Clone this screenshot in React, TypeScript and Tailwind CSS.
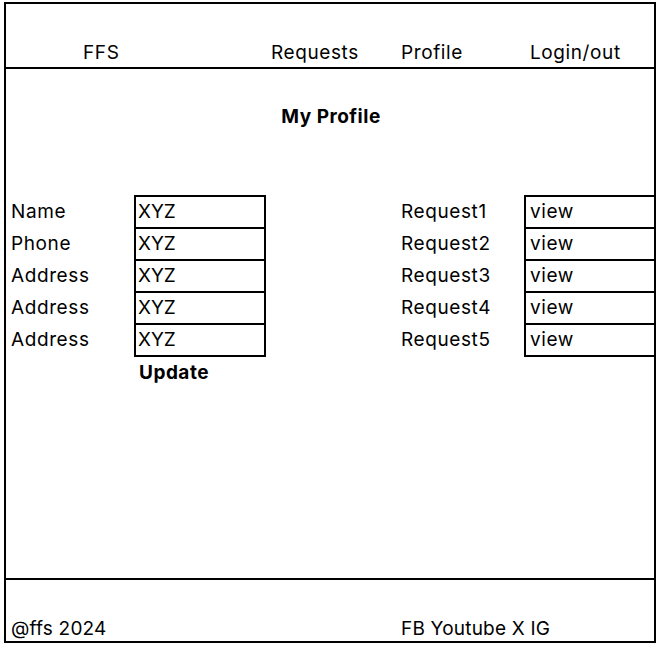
export default function App() {
  const fields = ["Name", "Phone", "Address", "Address", "Address"];
  const requests = ["Request1", "Request2", "Request3", "Request4", "Request5"];

  return (
    <div className="h-[648px] w-[662px] bg-white pl-[4px] pt-[2px] font-[Inter,sans-serif] text-[19px] tracking-[0.6px] text-black">
      <div className="flex h-[641px] w-[652px] flex-col border-2 border-black">
        {/* header */}
        <div className="flex h-[65px] items-end border-b-2 border-black pb-[2px] leading-[24px]">
          <div className="w-[128px] pl-[77px]">FFS</div>
          <div className="w-[132px]"></div>
          <div className="w-[130px] pl-[5px]">Requests</div>
          <div className="w-[128px] pl-[5px]">Profile</div>
          <div className="w-[130px] pl-[6px]">Login/out</div>
        </div>

        {/* main */}
        <div className="flex-1 pt-[36px]">
          <div className="pl-[2px] text-center font-bold leading-[24px] tracking-[0.5px]">My Profile</div>

          <div className="mt-[66px] flex">
            <div className="flex w-[128px] flex-col gap-[2px] pl-[5px] pt-[2px]">
              {fields.map((f, i) => (
                <div key={i} className="h-[30px] leading-[30px]">
                  {f}
                </div>
              ))}
            </div>
            <div className="w-[132px]">
              <div className="border-2 border-black">
                {fields.map((f, i) => (
                  <div
                    key={i}
                    className={
                      i === 0
                        ? "h-[30px] pl-[2px] leading-[30px] tracking-normal"
                        : "h-[32px] border-t-2 border-black pl-[2px] leading-[30px] tracking-normal"
                    }
                  >
                    XYZ
                  </div>
                ))}
              </div>
              <div className="mt-[4px] pl-[5px] font-bold leading-[24px] tracking-[0.5px]">Update</div>
            </div>
            <div className="w-[130px]"></div>
            <div className="flex w-[128px] flex-col gap-[2px] pl-[5px] pt-[2px]">
              {requests.map((r) => (
                <div key={r} className="h-[30px] leading-[30px]">
                  {r}
                </div>
              ))}
            </div>
            <div className="h-[162px] w-[130px] border-y-2 border-l-2 border-black">
              {requests.map((r, i) => (
                <div
                  key={r}
                  className={
                    i === 0
                      ? "h-[30px] pl-[4px] leading-[30px]"
                      : "h-[32px] border-t-2 border-black pl-[4px] leading-[30px]"
                  }
                >
                  view
                </div>
              ))}
            </div>
          </div>
        </div>

        {/* footer */}
        <div className="flex h-[63px] items-end border-t-2 border-black leading-[24px] tracking-[0.2px]">
          <div className="w-[390px] pl-[5px]">@ffs 2024</div>
          <div className="pl-[5px]">FB Youtube X IG</div>
        </div>
      </div>
    </div>
  );
}
